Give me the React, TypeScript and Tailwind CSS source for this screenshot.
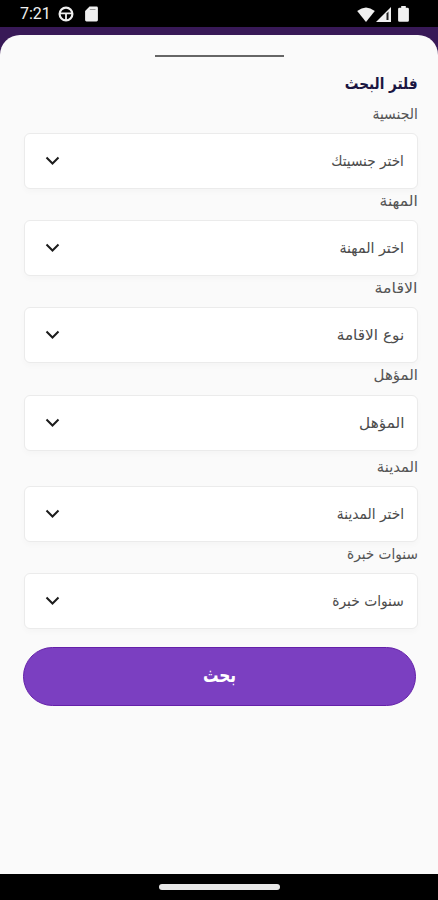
import { useState } from 'react'
import clsx from 'clsx'

interface Filter {
  id: string
  label: string
  placeholder: string
  labelClass: string
  textClass: string
  className?: string
}

const FILTERS: Filter[] = [
  { id: 'nationality', label: 'الجنسية', placeholder: 'اختر جنسيتك', labelClass: 'scale-x-[.93]', textClass: 'scale-x-[.91]' },
  { id: 'job', label: 'المهنة', placeholder: 'اختر المهنة', labelClass: 'scale-x-[1.04]', textClass: 'scale-x-[.95]' },
  { id: 'residence', label: 'الاقامة', placeholder: 'نوع الاقامة', labelClass: 'scale-x-[1.06]', textClass: 'scale-x-[1.02]' },
  { id: 'degree', label: 'المؤهل', placeholder: 'المؤهل', labelClass: 'scale-x-100', textClass: 'scale-x-[1.02]' },
  { id: 'city', label: 'المدينة', placeholder: 'اختر المدينة', labelClass: 'scale-x-[.98]', textClass: 'scale-x-[.92]', className: 'mt-[4px]' },
  { id: 'experience', label: 'سنوات خبرة', placeholder: 'سنوات خبرة', labelClass: 'scale-x-[.91]', textClass: 'scale-x-[.92]' }
]

export default function App(): React.JSX.Element {
  const [open, setOpen] = useState<string | null>(null)

  return (
    <div className="flex h-[900px] w-[438px] flex-col overflow-hidden bg-[#381957] font-['DejaVu_Sans',sans-serif]">
      <StatusBar />

      {/* Filter sheet */}
      <main dir="rtl" className="mt-2 flex flex-1 flex-col rounded-t-[20px] bg-[#fafafa] pr-5 pl-6">
        <div className="mt-5 mr-[134px] h-[2px] w-[129px] shrink-0 bg-[#666]" />
        <h1 className="mt-[15px] flex h-[29.6px] items-start text-[16px] leading-[24px] font-bold text-[#1b1642]">
          <span className="inline-block origin-right scale-x-[.85] whitespace-nowrap">فلتر البحث</span>
        </h1>

        {FILTERS.map((f) => (
          <FilterField
            key={f.id}
            filter={f}
            open={open === f.id}
            onToggle={() => setOpen(open === f.id ? null : f.id)}
          />
        ))}

        <button className="mt-[17.4px] mr-[2px] -ml-px flex h-[59px] shrink-0 items-center justify-center rounded-full border border-[#6420a9] bg-[#7b3fc1] pb-[2px] text-[20px] font-bold text-white">
          <span className="inline-block scale-x-[.77]">بحث</span>
        </button>
      </main>

      {/* Gesture bar */}
      <div className="flex h-[26px] shrink-0 justify-center bg-black pt-[10px]">
        <div className="h-[6px] w-[121px] rounded-full bg-[#e8e8e8]" />
      </div>
    </div>
  )
}

// ─── Filter field ─────────────────────────────────────────────────────────────

function FilterField({
  filter,
  open,
  onToggle
}: {
  filter: Filter
  open: boolean
  onToggle: () => void
}): React.JSX.Element {
  return (
    <div className={clsx('shrink-0', filter.className)}>
      <div className="h-[31.3px] text-[15px] leading-[25px] text-[#555]">
        <span className={clsx('inline-block origin-right whitespace-nowrap', filter.labelClass)}>{filter.label}</span>
      </div>
      <button
        onClick={onToggle}
        aria-expanded={open}
        className="flex h-[56px] w-full items-center justify-between rounded-[6px] border border-[#ebebeb] bg-white pr-[13px] pl-[20px] text-[15px] text-[#4c4c4c] shadow-[0_3px_6px_rgba(0,0,0,0.025)]"
      >
        <span className={clsx('inline-block origin-right whitespace-nowrap', filter.textClass)}>{filter.placeholder}</span>
        <svg viewBox="0 0 15 10" className="h-[10px] w-[15px]" fill="none" stroke="#1c1c1c" strokeWidth="2">
          <path d="M1.5 1.5 7.5 7.5 13.5 1.5" />
        </svg>
      </button>
    </div>
  )
}

// ─── Status bar ───────────────────────────────────────────────────────────────

function StatusBar(): React.JSX.Element {
  return (
    <header className="flex h-[27px] shrink-0 items-center bg-black pt-px pr-[29px] pl-[20px] text-[#f0f0f0]">
      <span className="w-[31px] font-[Roboto,sans-serif] text-[16px] leading-none">7:21</span>
      <svg viewBox="0 0 16 16" className="ml-[7px] size-4" fill="none" stroke="currentColor">
        <circle cx="8" cy="8" r="6.4" strokeWidth="2.2" />
        <path d="M2 7.3h12M8 8v6" strokeWidth="1.8" />
      </svg>
      <svg viewBox="0 0 13 16" className="ml-[11px] h-4 w-[13px]" fill="currentColor">
        <path d="M4.5.5H11.5a1.4 1.4 0 0 1 1.4 1.4V14a1.4 1.4 0 0 1-1.4 1.4h-10A1.4 1.4 0 0 1 .1 14V5z" />
        <path d="M4.8 3.5h5.7" stroke="#999" strokeWidth="1" />
      </svg>
      <div className="ml-auto flex items-center">
        <svg viewBox="0 0 18 15" className="h-[15px] w-[18px]" fill="currentColor">
          <path d="M9 15 .2 4Q9-3.2 17.8 4z" />
        </svg>
        <svg viewBox="0 0 15 15" className="ml-[1px] h-[15px] w-[15px]">
          <path d="M0 15 15 0v15z" fill="currentColor" />
          <path d="M10.5 6.5 12.5 4.5V13h-2z" fill="#222" />
        </svg>
        <svg viewBox="0 0 11 16" className="ml-[7px] h-4 w-[11px]" fill="currentColor">
          <path d="M3.2 0h4.6v1.7h1.7A1.4 1.4 0 0 1 10.9 3v11.4a1.4 1.4 0 0 1-1.4 1.4h-8A1.4 1.4 0 0 1 .1 14.4V3a1.4 1.4 0 0 1 1.4-1.3h1.7z" />
        </svg>
      </div>
    </header>
  )
}
